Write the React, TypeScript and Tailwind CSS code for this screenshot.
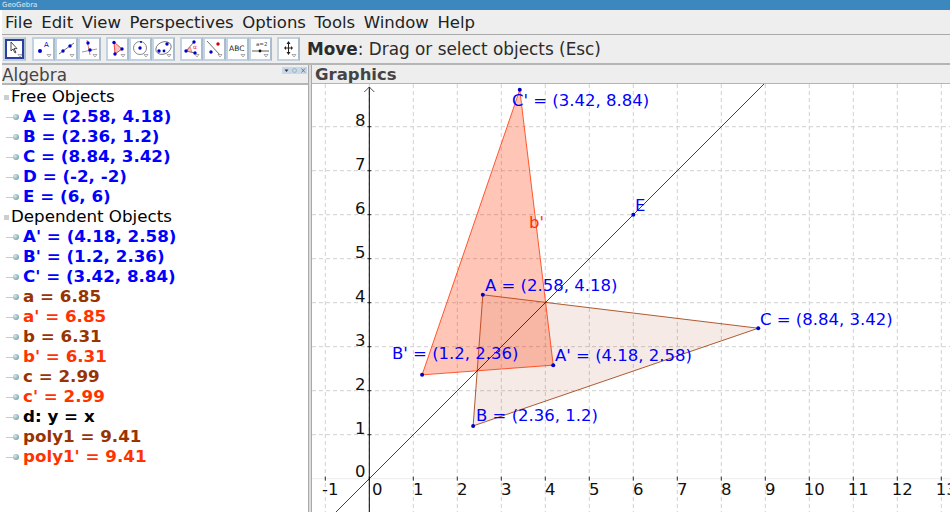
const font = "font-['DejaVu_Sans',sans-serif]"

const freeRows = [
    'A = (2.58, 4.18)',
    'B = (2.36, 1.2)',
    'C = (8.84, 3.42)',
    'D = (-2, -2)',
    'E = (6, 6)',
]
const depRows = [
    { label: "A' = (4.18, 2.58)", color: 'text-[#0000ff]' },
    { label: "B' = (1.2, 2.36)", color: 'text-[#0000ff]' },
    { label: "C' = (3.42, 8.84)", color: 'text-[#0000ff]' },
    { label: 'a = 6.85', color: 'text-[#993300]' },
    { label: "a' = 6.85", color: 'text-[#ff3300]' },
    { label: 'b = 6.31', color: 'text-[#993300]' },
    { label: "b' = 6.31", color: 'text-[#ff3300]' },
    { label: 'c = 2.99', color: 'text-[#993300]' },
    { label: "c' = 2.99", color: 'text-[#ff3300]' },
    { label: 'd: y = x', color: 'text-black' },
    { label: 'poly1 = 9.41', color: 'text-[#993300]' },
    { label: "poly1' = 9.41", color: 'text-[#ff3300]' },
]

const ox = 57.3
const oy = 394.7
const unit = 44
const px = (x: number) => ox + x * unit
const py = (y: number) => oy - y * unit
const pts = (list: number[][]) => list.map(([x, y]) => `${px(x)},${py(y)}`).join(' ')

function Tool({ selected, children }: { selected?: boolean; children: React.ReactNode }) {
    return (
        <div className="relative w-[23px] h-[24px] border-2 border-[#c3d2e0] border-r-[#a9bccd] bg-white">
            <div className={selected ? 'w-full h-full border-2 border-[#2b3f9e]' : 'w-full h-full'}>
                <svg viewBox={selected ? '2 2 15 16' : '0 0 19 20'} className="w-full h-full">
                    {children}
                    <path d="M13 15.5h4l-2 2.5z" fill="#fff" stroke="#777" strokeWidth="0.6" />
                </svg>
            </div>
        </div>
    )
}

const Dot = ({ x, y, c = '#0000cc', r = 1.7 }: { x: number; y: number; c?: string; r?: number }) => (
    <circle cx={x} cy={y} r={r} fill={c} />
)

function Toolbar() {
    return (
        <div className="h-[28px] bg-[#eeeeee] flex items-center pl-[1px]">
            <Tool selected>
                <path d="M6 3v9l2-2 2 4 1-.6-2-3.8h3z" fill="#fff" stroke="#222" strokeWidth="0.8" />
            </Tool>
            <div className="flex ml-[6px]">
                <Tool>
                    <Dot x={6} y={12} r={2} />
                    <text x={10} y={8} fontSize="7" fill="#0000cc" fontFamily="DejaVu Sans">A</text>
                </Tool>
                <Tool>
                    <path d="M2 15 17 4" stroke="#333" strokeWidth="0.7" />
                    <Dot x={6} y={12} />
                    <Dot x={13} y={7} />
                </Tool>
                <Tool>
                    <path d="M7 1l3 15" stroke="#e33" strokeWidth="0.7" />
                    <path d="M2 13l15-3" stroke="#555" strokeWidth="0.6" />
                    <Dot x={8} y={4} />
                    <Dot x={10} y={11} />
                </Tool>
            </div>
            <div className="flex ml-[5px]">
                <Tool>
                    <path d="M6 3l8 7-7 5z" fill="#f9c6bb" stroke="#e33" strokeWidth="0.9" />
                    <Dot x={6} y={3.5} />
                    <Dot x={14} y={10} />
                    <Dot x={7} y={15} />
                </Tool>
                <Tool>
                    <circle cx={9} cy={9} r={6.5} fill="none" stroke="#555" strokeWidth="0.7" />
                    <Dot x={9} y={9} />
                    <Dot x={10} y={3} r={1} />
                </Tool>
                <Tool>
                    <ellipse cx={9.5} cy={9} rx={8} ry={6} fill="none" stroke="#555" strokeWidth="0.7" transform="rotate(-25 9.5 9)" />
                    <Dot x={5} y={12} />
                    <Dot x={13} y={5} />
                    <Dot x={10} y={12} r={1.4} />
                </Tool>
            </div>
            <div className="flex ml-[5px]">
                <Tool>
                    <path d="M12 3L4 12l9 2" fill="none" stroke="#333" strokeWidth="0.7" />
                    <path d="M8 8l2 5-5-1z" fill="#f9c6bb" stroke="#e33" strokeWidth="0.5" />
                    <Dot x={12} y={3} />
                    <Dot x={4} y={12} />
                    <Dot x={13} y={14} />
                    <text x={11} y={10} fontSize="6" fill="#e33" fontFamily="DejaVu Sans">α</text>
                </Tool>
                <Tool>
                    <path d="M2 2l13 14" stroke="#333" strokeWidth="0.7" />
                    <Dot x={13} y={5} c="#cc0000" />
                    <Dot x={6} y={13} />
                </Tool>
                <Tool>
                    <text x={1} y={12} fontSize="7.5" fill="#222" fontFamily="DejaVu Sans">ABC</text>
                </Tool>
                <Tool>
                    <text x={5} y={7} fontSize="5.5" fill="#444" fontFamily="DejaVu Sans">a=2</text>
                    <path d="M1 12h17" stroke="#333" strokeWidth="0.8" />
                    <Dot x={9} y={12} r={1.4} c="#111" />
                </Tool>
            </div>
            <div className="flex ml-[5px]">
                <Tool>
                    <path d="M9.5 3v12M6 9h7" stroke="#222" strokeWidth="1" />
                    <path d="M9.5 2l-2 3h4zM9.5 16l-2-3h4zM5 9l2-2v4zM14 9l-2-2v4z" fill="#222" />
                </Tool>
            </div>
            <div className={`ml-[7px] mt-[2px] text-[16.85px] text-[#2b2b2b] ${font}`}>
                <span className="font-bold">Move</span>: Drag or select objects (Esc)
            </div>
        </div>
    )
}

function TreeRow({ label, color }: { label: string; color: string }) {
    return (
        <div className="h-[20px] flex items-center pl-[4px]">
            <span className="w-[7px] h-px bg-[#c4ccd4]" />
            <span className="w-[6px] h-[6px] rounded-full bg-[radial-gradient(circle_at_35%_35%,#d6e8ea,#5e8f96)]" />
            <span className={`ml-[4px] font-bold whitespace-nowrap ${color}`}>{label}</span>
        </div>
    )
}

function TreeHeader({ label }: { label: string }) {
    return (
        <div className="h-[20px] flex items-center pl-[2px] text-black">
            <span className="w-[5px] h-[5px] bg-[#c9ced3] mr-[2px]" />
            {label}
        </div>
    )
}

function DockButtons() {
    return (
        <svg width="25" height="7" className="mt-[2px] mr-[1px] bg-[#c8d8e8]">
            <path d="M2.5 2.5h4l-2 2.5z" fill="#333" />
            <circle cx="12.5" cy="3.5" r="2" fill="none" stroke="#8aa" strokeWidth="0.7" />
            <path d="M19.5 1.5l3.5 4M23 1.5l-3.5 4" stroke="#666" strokeWidth="0.8" />
        </svg>
    )
}

function AlgebraPanel() {
    return (
        <div className={`w-[306px] flex flex-col bg-white ${font}`}>
            <div className="h-[20px] bg-[#eeeeee] border-b-2 border-[#b5b5b5] flex items-start justify-between">
                <span className="text-[16.8px] leading-[21px] text-[#444444]">Algebra</span>
                <DockButtons />
            </div>
            <div className="flex-1 text-[16.7px] pt-[2px]">
                <TreeHeader label="Free Objects" />
                {freeRows.map((row) => (
                    <TreeRow key={row} label={row} color="text-[#0000ff]" />
                ))}
                <TreeHeader label="Dependent Objects" />
                {depRows.map((row) => (
                    <TreeRow key={row.label} label={row.label} color={row.color} />
                ))}
            </div>
        </div>
    )
}

function Plot() {
    const xs = [-1, 0, 1, 2, 3, 4, 5, 6, 7, 8, 9, 10, 11, 12, 13]
    const ys = [1, 2, 3, 4, 5, 6, 7, 8]
    const A = [2.58, 4.18]
    const B = [2.36, 1.2]
    const C = [8.84, 3.42]
    const A1 = [4.18, 2.58]
    const B1 = [1.2, 2.36]
    const C1 = [3.42, 8.84]
    const points = [A, B, C, A1, B1, C1, [6, 6]]
    const labels = [
        { t: "C' = (3.42, 8.84)", x: 200, y: 22 },
        { t: "b'", x: 217, y: 144, c: '#ff3300' },
        { t: 'E', x: 323, y: 127 },
        { t: 'A = (2.58, 4.18)', x: 173, y: 207 },
        { t: 'C = (8.84, 3.42)', x: 448, y: 241 },
        { t: "B' = (1.2, 2.36)", x: 80, y: 275 },
        { t: "A' = (4.18, 2.58)", x: 243, y: 277 },
        { t: 'B = (2.36, 1.2)', x: 164, y: 337 },
    ]
    return (
        <svg width="638" height="428" className="block" fontFamily="DejaVu Sans">
            {xs.map((x) => (
                <line key={x} x1={px(x)} x2={px(x)} y1="0" y2="428" stroke="#d0d0d0" strokeDasharray="4 3" />
            ))}
            {ys.map((y) => (
                <line key={y} x1="0" x2="638" y1={py(y)} y2={py(y)} stroke="#d0d0d0" strokeDasharray="4 3" />
            ))}
            <line x1="0" x2="638" y1={oy} y2={oy} stroke="#ececec" />
            <polygon points={pts([A, B, C])} fill="#993300" fillOpacity="0.1" stroke="#993300" strokeWidth="0.8" />
            <polygon points={pts([A1, B1, C1])} fill="#ff3300" fillOpacity="0.28" stroke="#ff3300" strokeWidth="0.8" />
            <line x1={px(-1)} y1={py(-1)} x2={px(9)} y2={py(9)} stroke="#111" strokeWidth="0.8" />
            <line x1={ox} y1="3" x2={ox} y2="428" stroke="#000" />
            <path d={`M${ox - 5} 8l5-5 5 5`} fill="none" stroke="#222" strokeWidth="0.8" />
            {xs.map((x) => (
                <line key={x} x1={px(x)} x2={px(x)} y1={oy - 2} y2={oy + 2} stroke="#000" strokeWidth="0.8" />
            ))}
            {ys.map((y) => (
                <line key={y} x1={ox - 2} x2={ox + 2} y1={py(y)} y2={py(y)} stroke="#000" strokeWidth="0.8" />
            ))}
            {xs.map((x) => (
                <text key={x} x={px(x) + (x === 0 ? 8 : 5)} y="411" fontSize="16.5" fill="#111" textAnchor="middle">
                    {x}
                </text>
            ))}
            {ys.map((y) => (
                <text key={y} x="43" y={py(y) - 1} fontSize="16.5" fill="#111">
                    {y}
                </text>
            ))}
            <text x="43" y="393" fontSize="16.5" fill="#111">0</text>
            {points.map(([x, y]) => (
                <circle key={x} cx={px(x)} cy={py(y)} r="2" fill="#0000cc" />
            ))}
            {labels.map((l) => (
                <text key={l.t} x={l.x} y={l.y} fontSize="16.5" fill={l.c ?? '#0000ff'}>
                    {l.t}
                </text>
            ))}
        </svg>
    )
}

export default function App() {
    return (
        <div className="w-[950px] h-[512px] overflow-hidden flex flex-col bg-white">
            <div className={`h-[10px] bg-[#3d87bf] text-[7px] leading-[10px] pl-[2px] text-[#dfeaf3] ${font}`}>
                GeoGebra
            </div>
            <div className="flex-1 flex flex-col pl-[2px] min-h-0">
                <div className={`h-[25px] bg-[#eeeeee] flex items-center gap-[8.6px] pl-[3px] pt-[2px] text-[16.5px] text-[#222222] border-b border-[#aaaaaa] ${font}`}>
                    <span>File</span>
                    <span>Edit</span>
                    <span>View</span>
                    <span>Perspectives</span>
                    <span>Options</span>
                    <span>Tools</span>
                    <span>Window</span>
                    <span>Help</span>
                </div>
                <Toolbar />
                <div className="flex-1 flex min-h-0 border-t-2 border-[#b5b5b5]">
                    <AlgebraPanel />
                    <div className="w-[4px] bg-[#dcdcdc] border-l border-r border-[#aaaaaa]" />
                    <div className="flex-1 flex flex-col min-w-0">
                        <div className={`h-[19px] bg-[#eeeeee] border-b border-[#b5b5b5] text-[16.5px] leading-[20px] pl-[3px] font-bold text-[#444444] ${font}`}>
                            Graphics
                        </div>
                        <Plot />
                    </div>
                </div>
            </div>
        </div>
    )
}
